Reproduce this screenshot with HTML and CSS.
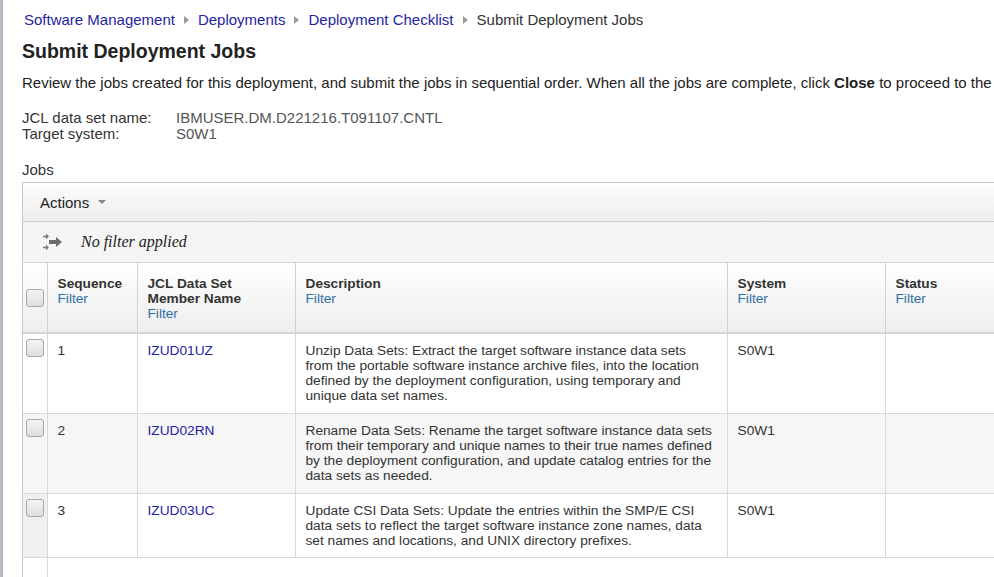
FILE: index.html
```html
<!DOCTYPE html>
<html>
<head>
<meta charset="utf-8">
<title>Submit Deployment Jobs</title>
<link rel="stylesheet" href="styles.css">
</head>
<body>
<div class="page">
  <nav class="crumbs">
    <a href="#">Software Management</a><span class="sep"></span>
    <a href="#">Deployments</a><span class="sep"></span>
    <a href="#">Deployment Checklist</a><span class="sep"></span>
    <span class="current">Submit Deployment Jobs</span>
  </nav>
  <h1 class="title">Submit Deployment Jobs</h1>
  <p class="intro">Review the jobs created for this deployment, and submit the jobs in sequential order. When all the jobs are complete, click <b>Close</b> to proceed to the next step.</p>
  <dl class="props">
    <div class="prop"><dt>JCL data set name:</dt><dd>IBMUSER.DM.D221216.T091107.CNTL</dd></div>
    <div class="prop"><dt>Target system:</dt><dd>S0W1</dd></div>
  </dl>
  <div class="jobs-label">Jobs</div>
  <div class="grid">
    <div class="toolbar">
      <span class="actions">Actions <span class="caret"></span></span>
    </div>
    <div class="filterbar">
      <svg class="ficon" width="21" height="18" viewBox="0 0 21 18">
        <g fill="none" stroke="#777" stroke-width="1.3">
          <path d="M1 3.5h5M4 1.5l2 2-2 2"/>
          <path d="M1 14.5h5M4 12.5l2 2-2 2"/>
        </g>
        <path d="M7 7h7V4l6 5-6 5v-3H7z" fill="#6c6c6c"/>
      </svg>
      <span class="nofilter">No filter applied</span>
    </div>
    <table class="tbl">
      <colgroup>
        <col class="c-chk"><col class="c-seq"><col class="c-mem"><col class="c-desc"><col class="c-sys"><col class="c-stat">
      </colgroup>
      <thead>
        <tr>
          <th class="chk"><span class="box"></span></th>
          <th>Sequence<span class="flt">Filter</span></th>
          <th>JCL Data Set<br>Member Name<span class="flt">Filter</span></th>
          <th>Description<span class="flt">Filter</span></th>
          <th>System<span class="flt">Filter</span></th>
          <th>Status<span class="flt">Filter</span></th>
        </tr>
      </thead>
      <tbody>
        <tr>
          <td class="chk"><span class="box"></span></td>
          <td>1</td>
          <td><a href="#">IZUD01UZ</a></td>
          <td>Unzip Data Sets: Extract the target software instance data sets from the portable software instance archive files, into the location defined by the deployment configuration, using temporary and unique data set names.</td>
          <td>S0W1</td>
          <td></td>
        </tr>
        <tr class="alt">
          <td class="chk"><span class="box"></span></td>
          <td>2</td>
          <td><a href="#">IZUD02RN</a></td>
          <td>Rename Data Sets: Rename the target software instance data sets from their temporary and unique names to their true names defined by the deployment configuration, and update catalog entries for the data sets as needed.</td>
          <td>S0W1</td>
          <td></td>
        </tr>
        <tr class="last">
          <td class="chk"><span class="box"></span></td>
          <td>3</td>
          <td><a href="#">IZUD03UC</a></td>
          <td>Update CSI Data Sets: Update the entries within the SMP/E CSI data sets to reflect the target software instance zone names, data set names and locations, and UNIX directory prefixes.</td>
          <td>S0W1</td>
          <td></td>
        </tr>
        <tr class="filler">
          <td class="chk"></td>
          <td colspan="5"></td>
        </tr>
      </tbody>
    </table>
  </div>
</div>
</body>
</html>
```

FILE: styles.css
```css
html, body {
  margin: 0;
  padding: 0;
  background: #fff;
  overflow: hidden;
}
body {
  font-family: "Liberation Sans", Arial, sans-serif;
  color: #222;
  height: 577px;
}
.page {
  border-left: 3px solid #b3bcc5;
  padding: 11px 0 0 19px;
  height: 577px;
  box-sizing: border-box;
  width: 1200px;
  overflow: hidden;
}
.crumbs {
  font-size: 15px;
  line-height: 18px;
  padding-left: 2px;
  display: flex;
  align-items: center;
  white-space: nowrap;
}
.crumbs a {
  color: #2424a0;
  text-decoration: none;
}
.crumbs .current { color: #333; }
.sep {
  display: inline-block;
  width: 0;
  height: 0;
  border-top: 4px solid transparent;
  border-bottom: 4px solid transparent;
  border-left: 5px solid #9a9a9a;
  margin: 0 9px 0 9px;
}
.title {
  font-size: 19.5px;
  font-weight: bold;
  margin: 10px 0 0;
  line-height: 24px;
  color: #222;
}
.intro {
  font-size: 15px;
  line-height: 18px;
  margin: 11px 0 0;
  white-space: nowrap;
  color: #222;
}
.intro b { font-weight: bold; }
.props {
  margin: 18px 0 0;
  font-size: 15px;
  line-height: 16px;
}
.prop { display: flex; }
.props dt { width: 154px; color: #333; }
.props dd { margin: 0; color: #555; }
.jobs-label {
  font-size: 15px;
  line-height: 18px;
  margin-top: 19px;
  color: #333;
}
.grid {
  margin-top: 3px;
  border: 1px solid #c8c8c8;
  border-right: none;
}
.toolbar {
  height: 38px;
  display: flex;
  align-items: center;
  padding-left: 17px;
  background: linear-gradient(#fdfdfd, #ededed);
  border-bottom: 1px solid #cfcfcf;
}
.actions {
  font-size: 15px;
  color: #222;
  display: inline-flex;
  align-items: center;
}
.caret {
  display: inline-block;
  width: 0;
  height: 0;
  border-left: 4px solid transparent;
  border-right: 4px solid transparent;
  border-top: 4px solid #888;
  margin-left: 9px;
}
.filterbar {
  height: 40px;
  display: flex;
  align-items: center;
  padding-left: 19px;
  background: #f5f5f5;
  border-bottom: 1px solid #d4d4d4;
}
.ficon { margin-right: 18px; }
.nofilter {
  font-family: "Liberation Serif", "Times New Roman", serif;
  font-style: italic;
  font-size: 16px;
  color: #222;
}
.tbl {
  border-collapse: collapse;
  table-layout: fixed;
  width: 1180px;
  font-size: 13.7px;
}
.c-chk { width: 24px; }
.c-seq { width: 90px; }
.c-mem { width: 158px; }
.c-desc { width: 432px; }
.c-sys { width: 158px; }
.c-stat { width: 318px; }
.tbl th {
  text-align: left;
  vertical-align: top;
  font-weight: bold;
  color: #333;
  line-height: 15px;
  padding: 13px 10px 0 10px;
  height: 56px;
  background: linear-gradient(#fefefe, #eeeeee);
  border-left: 1px solid #d2d2d2;
  border-bottom: 2px solid #d6d6d6;
}
.tbl th:first-child, .tbl td:first-child { border-left: none; }
.flt {
  display: block;
  font-weight: normal;
  color: #2d6ea5;
}
.tbl th.chk, .tbl td.chk {
  padding: 0 0 0 3px;
}
.tbl th.chk { vertical-align: middle; }
.box {
  display: block;
  border: 1px solid #a8a8a8;
  border-radius: 3px;
  background: linear-gradient(#f4f4f4, #dedede);
  box-sizing: border-box;
  width: 18px;
  height: 18px;
}
.tbl td {
  vertical-align: top;
  color: #333;
  line-height: 15px;
  padding: 9px 10px 9px 10px;
  border-left: 1px solid #d9d9d9;
  border-bottom: 1px solid #d9d9d9;
  height: 61px;
}
.tbl td.chk { padding-top: 5px; }
.tbl td a {
  color: #2424a0;
  text-decoration: none;
}
.tbl tr.alt td { background: #f6f6f6; }
.tbl tr.last td { height: 45px; }
.tbl tr.last td.chk { background: #f0f0f0; }
.tbl tr.filler td {
  height: 40px;
  border-bottom: none;
  background: #fff;
}
```
